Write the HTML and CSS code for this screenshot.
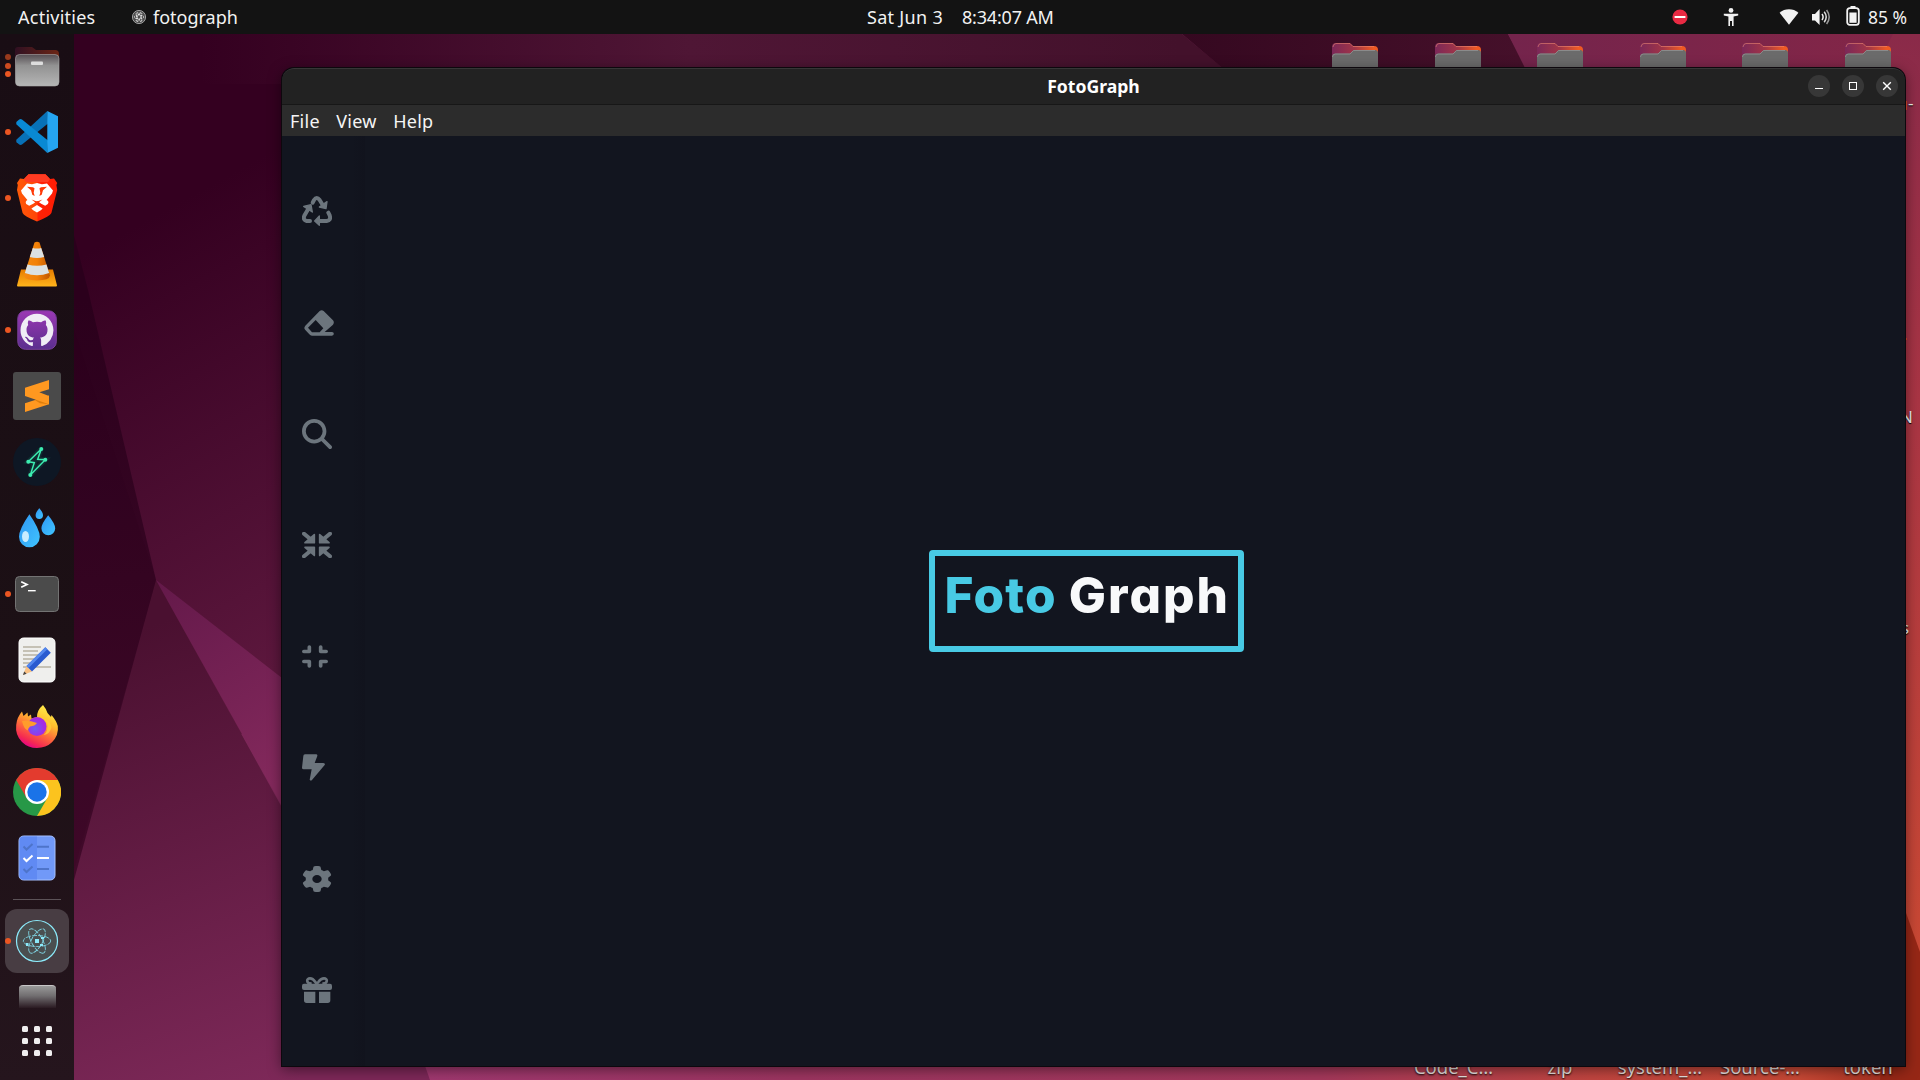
FILE: index.html
```html
<!DOCTYPE html>
<html lang="en">
<head>
<meta charset="utf-8">
<title>FotoGraph</title>
<link rel="stylesheet" href="styles.css">
</head>
<body>
<header class="topbar">
  <div class="topbar-left">
    <span class="activities">Activities</span>
    <span class="app-menu">
      <svg width="14" height="14" viewBox="0 0 14 14"><circle cx="7" cy="7" r="6.6" fill="#4b4b4b" stroke="#bbb" stroke-width=".8"/><g fill="none" stroke="#eee" stroke-width=".9" stroke-dasharray="1.4 .8"><ellipse cx="7" cy="7" rx="4.8" ry="1.9"/><ellipse cx="7" cy="7" rx="4.8" ry="1.9" transform="rotate(60 7 7)"/><ellipse cx="7" cy="7" rx="4.8" ry="1.9" transform="rotate(120 7 7)"/></g></svg>
      <span>fotograph</span>
    </span>
  </div>
  <div class="clock"><span class="date">Sat Jun 3</span><span class="time">8:34:07 AM</span></div>
  <div class="tray">
    <svg class="tray-dnd" width="16" height="16" viewBox="0 0 16 16"><circle cx="8" cy="8" r="7.6" fill="#e92a43"/><rect x="2.6" y="7" width="10.8" height="2" fill="#fff"/></svg>
    <svg class="tray-access" width="16" height="18" viewBox="0 0 16 18" fill="#f2f2f2"><circle cx="8" cy="2.4" r="2.4"/><path d="M.8 5.7h14.4v1.7L10.6 8.6V18H9v-5H7v5H5.4V8.6L.8 7.4z"/></svg>
    <svg class="tray-wifi" width="20" height="16" viewBox="0 0 20 16" fill="#f2f2f2"><path d="M10 15.8.6 3.8C5.8-.8 14.2-.8 19.4 3.8z"/></svg>
    <svg class="tray-volume" width="20" height="18" viewBox="0 0 20 18"><path d="M1 6h3l4.600-5v16L4 12.400H1z" fill="#f2f2f2"/><g fill="none" stroke="#f2f2f2" stroke-width="1.500"><path d="M11 6q2.200 3 0 6"/><path d="M13.200 3.800q4 5.200 0 10.400" opacity=".9"/><path d="M15.600 2q5.200 7 0 14" opacity=".6"/></g></svg>
    <svg class="tray-battery" width="14" height="20" viewBox="0 0 14 20"><rect x="4.500" y="0" width="5" height="3" fill="#f2f2f2"/><rect x="1.200" y="2.200" width="11.600" height="16.600" rx="2.600" fill="none" stroke="#f2f2f2" stroke-width="1.800"/><rect x="3.400" y="6.500" width="7.200" height="10.300" fill="#f2f2f2"/></svg>
    <span class="battery-text">85 %</span>
  </div>
</header>

<div class="screen">
  <nav class="dock">
    <div class="dock-item"><i class="dots three"><b></b><b></b><b></b></i>
      <svg viewBox="0 0 48 48"><defs><linearGradient id="fb"><stop offset="0" stop-color="#301022"/><stop offset="1" stop-color="#6c2515"/></linearGradient><linearGradient id="ff" x2="0" y2="1"><stop offset="0" stop-color="#554e53"/><stop offset=".35" stop-color="#929292"/><stop offset="1" stop-color="#b5b5b5"/></linearGradient></defs><path d="M2 15V7q0-3 3-3h14l4 3h19q4 0 4 4v9H2z" fill="url(#fb)"/><rect x="2.500" y="11.500" width="43.500" height="31.500" rx="4" fill="url(#ff)" stroke="#aaa" stroke-opacity=".6"/><rect x="18" y="18.500" width="12" height="3.500" rx="1" fill="#ddd"/></svg></div>
    <div class="dock-item"><i class="dots"><b></b></i>
      <svg viewBox="0 0 48 48"><path d="M34.300 3 3.600 31.500q-1 1.500 0 2.800l2.600 2.300q1.400.8 2.800 0L35 15.500z" fill="#0871b7"/><path d="M34.300 45 3.600 16.500q-1-1.500 0-2.800l2.600-2.300q1.400-.8 2.800 0L35 32.500z" fill="#0989d3"/><path d="M34.300 3 45 8.300v31.400L34.300 45z" fill="#25a5f1"/></svg></div>
    <div class="dock-item"><i class="dots"><b></b></i>
      <svg viewBox="0 0 48 48"><defs><linearGradient id="br"><stop offset="0" stop-color="#ff5b08"/><stop offset=".5" stop-color="#ff4408"/><stop offset=".52" stop-color="#ff2205"/><stop offset="1" stop-color="#ff1c04"/></linearGradient></defs><path d="M15.500.2h17L37 5l4-.4 3.200 4.400-.8 2 .8 5-5.800 23Q37 42 24 47.600 11 42 9.600 39L4 16l.8-5-.8-2 3-4.400L11 5z" fill="url(#br)"/><path d="M15.500.2h17L37 5l-2 3H13l-2-3z" fill="#ff3b22"/><path d="m14 9.500 5 .8 5-1.200 5 1.200 5-.8 6 7-1 3-5.400 6.500q3 1.500 1.200 4l-2.600 1.800-4-2-4-2.800-4 2.800-4 2-3-1.800q-1.400-2.500 1.200-4L9 19.500l-1-3zM24 31l5.600 3.500q-.8 1.500-5.600 4-4.800-2.500-5.600-4z" fill="#fff"/><path d="m14 12.800 6 .5 1.500 1-.8 4.500 1 3.200-2.400-1.200-1.300-4.600zM34 12.800l-6 .5-1.500 1 .8 4.500-1 3.200 2.400-1.200 1.300-4.600zM18.500 25.500l5.500 2 5.500-2-4.500 3.500h-2z" fill="#ff3907"/></svg></div>
    <div class="dock-item">
      <svg viewBox="0 0 48 48"><defs><linearGradient id="vl"><stop offset="0" stop-color="#f48a13"/><stop offset=".5" stop-color="#f28107"/><stop offset="1" stop-color="#c05600"/></linearGradient><linearGradient id="vb" x2="0" y2="1"><stop offset="0" stop-color="#e67c00"/><stop offset="1" stop-color="#ffb41c"/></linearGradient></defs><path d="M8 29.500h32L44 45.500q0 1-1 1H5q-1 0-1-1z" fill="url(#vb)"/><path d="M21.500 2.500q2.500-1.600 5 0L37 35.500q-.5 4.800-13 5-12.500-.2-13-5z" fill="url(#vl)"/><path d="M19.800 8q4.200 1 8.400 0l3 9q-7.200 2-14.400 0zM14.500 24.500q9.500 2.600 19 0l2.600 8.500q-12.100 4.500-24.200 0z" fill="#dbe1e3"/></svg></div>
    <div class="dock-item"><i class="dots"><b></b></i>
      <svg viewBox="0 0 48 48"><defs><linearGradient id="gh" x2="0" y2="1"><stop offset="0" stop-color="#9b38b4"/><stop offset="1" stop-color="#5b2f8e"/></linearGradient></defs><rect x="4.800" y="4.800" width="38.500" height="38.500" rx="7.500" fill="url(#gh)" stroke="#7b3f9c"/><path transform="translate(7.500 7.800) scale(2.060)" fill="#f0edf5" d="M8 0C3.580 0 0 3.580 0 8c0 3.540 2.290 6.530 5.470 7.590.4.070.55-.17.55-.38 0-.19-.010-.82-.010-1.490-2.010.37-2.530-.49-2.690-.94-.090-.23-.48-.94-.82-1.130-.28-.15-.68-.52-.010-.53.63-.010 1.080.58 1.230.82.72 1.210 1.870.87 2.330.66.070-.52.28-.87.51-1.070-1.780-.2-3.640-.89-3.640-3.950 0-.87.31-1.590.82-2.150-.080-.2-.36-1.020.080-2.120 0 0 .67-.21 2.200.82.64-.18 1.320-.27 2-.27s1.360.090 2 .27c1.530-1.040 2.200-.82 2.200-.82.44 1.100.16 1.920.080 2.120.51.56.82 1.270.82 2.150 0 3.070-1.870 3.750-3.650 3.950.29.25.54.73.54 1.480 0 1.070-.010 1.930-.010 2.200 0 .21.15.46.55.38A8.010 8.010 0 0 0 16 8c0-4.420-3.580-8-8-8z"/></svg></div>
    <div class="dock-item">
      <svg viewBox="0 0 48 48"><rect width="48" height="48" rx="3" fill="#4a4a4a"/><path d="m12 31.300 24-7.700v8.700L12 40z" fill="#ff9820"/><path d="m21.700 28 6-2 8.300 6.300-9-1z" fill="#dd7d0c"/><path d="M12 15.700 36 8v9.300l-9.700 3L36 24v8.300L12 24z" fill="#ff9820"/></svg></div>
    <div class="dock-item">
      <svg viewBox="0 0 48 48"><circle cx="24" cy="24" r="24" fill="#0e1724"/><path d="m28.300 11-3.600 10.300 7.600.4L17.300 37l4-12.300-6-1z" fill="none" stroke="#123a3b" stroke-width="5" opacity=".6"/><path d="m28.300 11-3.600 10.300 7.600.4L17.300 37l4-12.300-6-1z" fill="none" stroke="#3cecb0" stroke-width="1.500"/><g fill="#3cecb0"><circle cx="28.300" cy="11" r="2"/><circle cx="32.300" cy="21.700" r="2"/><circle cx="15.300" cy="23.700" r="2"/><circle cx="17.300" cy="37" r="2"/></g></svg></div>
    <div class="dock-item nudge">
      <svg viewBox="0 0 48 48"><defs><linearGradient id="dr" x2="1" y2="1"><stop offset="0" stop-color="#2f96f3"/><stop offset="1" stop-color="#40c4ff"/></linearGradient></defs><g fill="url(#dr)"><path d="M16.400 10.300q10.400 15 10.400 22.500a10.400 10.400 0 0 1-20.800 0q0-7.500 10.400-22.500z"/><path d="M26.300 4.300q3.700 4.200 3.700 7a3.700 3.700 0 0 1-7.400 0q0-2.800 3.700-7z"/><path d="M35.200 11.300q7 8.600 7 13a6.900 6.900 0 0 1-13.800 0q0-4.400 6.800-13z"/></g><ellipse cx="12.500" cy="32.500" rx="3.500" ry="5.600" fill="#c9edff"/></svg></div>
    <div class="dock-item"><i class="dots"><b></b></i>
      <svg viewBox="0 0 48 48"><rect x="2.500" y="6.500" width="43" height="35" rx="4" fill="#4b4b4b" stroke="#737373"/><path d="m8.200 11.700 5.800 2.800-5.800 2.800" fill="none" stroke="#fff" stroke-width="1.700"/><path d="M15 20.700h7.700" stroke="#fff" stroke-width="1.400"/></svg></div>
    <div class="dock-item">
      <svg viewBox="0 0 48 48"><rect x="6" y="2" width="36" height="44" rx="4.500" fill="#efefed" stroke="#fff"/><path d="M10 11h18M10 15h15M10 19h16M10 23h13M10 27h10M10 31h28" stroke="#c5c1b5" stroke-width="1.800"/><path d="m10 39 3.500-9 5.500 5.500z" fill="#fac183"/><path d="m10 39 1.200-3.400 2.400 2.100z" fill="#444"/><path d="m13.500 30 18.800-18.700 5.500 5.500L19 35.500z" fill="#2a5bd0"/><path d="m13.500 30 18.800-18.700 2 2L15.500 32z" fill="#5488ee"/></svg></div>
    <div class="dock-item nudge">
      <svg viewBox="0 0 48 48"><defs><linearGradient id="fx" x1=".8" y1="0" x2=".3" y2="1"><stop offset="0" stop-color="#fff44f"/><stop offset=".35" stop-color="#ffc02e"/><stop offset=".6" stop-color="#ff7139"/><stop offset=".85" stop-color="#f52a52"/><stop offset="1" stop-color="#e3008b"/></linearGradient><radialGradient id="fp" cx=".4" cy=".6"><stop offset="0" stop-color="#6b5cf6"/><stop offset="1" stop-color="#a52ae2"/></radialGradient></defs><path d="M30 3q3 3.500 4.500 8l3.500 4 .5-2q5 6 6.300 11Q46 33 39 40.300 33 46 24 46q-9 0-15-6-7-7-5.800-17Q4 15 9 9.500l1.500 4.500 4-3.500.5 4 3-2 .5 4L24 15q0-7 6-12z" fill="url(#fx)"/><circle cx="24" cy="24.500" r="9.500" fill="url(#fp)"/><path d="M9 19q7-1 15 2-2 3-7 3.500-2 2-2 4-4-1-6-9.500z" fill="#ff9c2c"/><path d="M28 15.500q9 4 6 13-1 3-3.500 4.500Q37 32 38.500 25.500 38 18 28 15.500z" fill="#ffcb38" opacity=".85"/></svg></div>
    <div class="dock-item">
      <svg viewBox="0 0 48 48"><circle cx="24" cy="24" r="24" fill="#279847"/><path d="M24 24 13.600 30 3.200 12A24 24 0 0 1 44.800 12z" fill="#e33b2e"/><path d="M24 12h20.800A24 24 0 0 1 24 48l10.400-18z" fill="#fcc31e"/><circle cx="24" cy="24" r="12" fill="#fff"/><circle cx="24" cy="24" r="9.700" fill="#1a73e8"/></svg></div>
    <div class="dock-item">
      <svg viewBox="0 0 48 48"><rect x="6" y="2" width="36" height="44" rx="4.500" fill="#7199f8" stroke="#a6c0ff"/><path d="M10.500 2.500H24v43H10.500q-4 0-4-4v-35q0-4 4-4z" fill="#608af3"/><g fill="none" stroke-width="2"><path d="m10.500 12.500 3 3 6-5.500M24 12.700h12M10.500 35l3 3 6-5.500M24 35h12" stroke="#4e74ca"/><path d="m10.500 24 3 3 6-5.500M24 24h12" stroke="#fff"/></g></svg></div>
    <hr class="dock-sep">
    <div class="dock-item active"><i class="dots"><b></b></i>
      <svg viewBox="0 0 48 48"><circle cx="24" cy="24" r="20.500" fill="#4a4f50" stroke="#8ceafa" stroke-width="1.200"/><g fill="none" stroke="#7fd4e2" stroke-width=".9" stroke-dasharray="5 1"><ellipse cx="24" cy="24" rx="13.700" ry="5.500"/><ellipse cx="24" cy="24" rx="13.700" ry="5.500" transform="rotate(60 24 24)"/><ellipse cx="24" cy="24" rx="13.700" ry="5.500" transform="rotate(120 24 24)"/></g><g fill="#8ceafa"><rect x="22" y="22" width="4" height="4"/><rect x="28" y="20" width="3" height="2"/><rect x="13" y="26" width="2.500" height="3"/><rect x="27" y="27" width="3" height="2"/></g></svg></div>
    <div class="trash"></div>
    <div class="apps"><b></b><b></b><b></b><b></b><b></b><b></b><b></b><b></b><b></b></div>
  </nav>

  <main class="desktop">
    <svg class="wallpaper" width="1920" height="1080" viewBox="0 0 1920 1080">
      <defs>
        <linearGradient id="w0" gradientUnits="userSpaceOnUse" x1="110" y1="240" x2="330" y2="640"><stop offset="0" stop-color="#340020"/><stop offset="1" stop-color="#5c173d"/></linearGradient>
        <linearGradient id="w1" gradientUnits="userSpaceOnUse" x1="74" y1="300" x2="120" y2="860"><stop offset="0" stop-color="#2b001c"/><stop offset="1" stop-color="#410a2a"/></linearGradient>
        <linearGradient id="w2" gradientUnits="userSpaceOnUse" x1="110" y1="640" x2="270" y2="1090"><stop offset="0" stop-color="#4a1030"/><stop offset="1" stop-color="#7e2959"/></linearGradient>
        <linearGradient id="w3" gradientUnits="userSpaceOnUse" x1="160" y1="580" x2="282" y2="780"><stop offset="0" stop-color="#64194a"/><stop offset="1" stop-color="#83295c"/></linearGradient>
        <linearGradient id="wt" gradientUnits="userSpaceOnUse" x1="200" y1="0" x2="1180" y2="0"><stop offset="0" stop-color="#340020"/><stop offset=".5" stop-color="#4f1635"/><stop offset="1" stop-color="#43112b"/></linearGradient>
        <linearGradient id="wd" gradientUnits="userSpaceOnUse" x1="1180" y1="0" x2="1520" y2="0"><stop offset="0" stop-color="#350820"/><stop offset="1" stop-color="#45102a"/></linearGradient>
        <linearGradient id="wp" gradientUnits="userSpaceOnUse" x1="1510" y1="0" x2="1900" y2="0"><stop offset="0" stop-color="#74244c"/><stop offset="1" stop-color="#832647"/></linearGradient>
        <linearGradient id="wr" gradientUnits="userSpaceOnUse" x1="0" y1="34" x2="0" y2="950"><stop offset="0" stop-color="#8a2a49"/><stop offset=".4" stop-color="#a93544"/><stop offset="1" stop-color="#c94834"/></linearGradient>
        <linearGradient id="wb" gradientUnits="userSpaceOnUse" x1="420" y1="0" x2="1920" y2="0"><stop offset="0" stop-color="#a03870"/><stop offset=".25" stop-color="#9c3560"/><stop offset=".6" stop-color="#a4385b"/><stop offset=".78" stop-color="#c14540"/><stop offset=".92" stop-color="#c74835"/><stop offset="1" stop-color="#992818"/></linearGradient>
      </defs>
      <rect width="1920" height="1080" fill="#7d2858"/>
      <path d="M74 34h300v700H74z" fill="url(#w0)"/>
      <path d="M200 34h982l60 50H200z" fill="url(#wt)"/>
      <path d="M1182 34h326l30 54h-292z" fill="url(#wd)"/>
      <path d="M1508 34h412v60h-382z" fill="url(#wp)"/>
      <path d="M1893 34h27v1046h-40V60z" fill="url(#wr)"/>
      <path d="M156 580 300 840v240H74V620z" fill="url(#w2)"/>
      <path d="M74 235l14 55 68 290L74 880z" fill="url(#w1)"/>
      <path d="M74 330l82 250-82 290z" fill="#2a001a" opacity=".12"/>
      <path d="m156 580 144 112v146z" fill="url(#w3)"/>
      <path d="M423 1060h1497v20H430z" fill="url(#wb)"/>
      <path d="m1900 896 20 56v128h-40z" fill="#962716"/>
      <path d="M1905 101h2v9h-2zM1905 338h2v2h-2z" fill="#d9482c"/>
    </svg>
    <svg width="0" height="0"><defs><linearGradient id="dg"><stop offset="0" stop-color="#7b2858"/><stop offset=".5" stop-color="#a23547"/><stop offset=".9" stop-color="#ee5a25"/></linearGradient><symbol id="folder" viewBox="0 0 46 40"><path d="M0 20V4q0-4 4-4h14l3 3h21q4 0 4 4v13z" fill="url(#dg)"/><path d="M1 4q.5-3.500 3-3.500h14l3 3h21" fill="none" stroke="#ef8a72" stroke-opacity=".55"/><path d="M0 40V14q0-3.500 3.500-3.500H18L21.500 7H43q3 0 3 3v30z" fill="#6b6b6b"/><path d="M.5 14q0-3 3-3H18L21.500 7.500H43" fill="none" stroke="#999" stroke-opacity=".7"/></symbol></defs></svg>
    <div class="folders">
      <svg><use href="#folder"/></svg><svg><use href="#folder"/></svg><svg><use href="#folder"/></svg><svg><use href="#folder"/></svg><svg><use href="#folder"/></svg><svg><use href="#folder"/></svg>
    </div>
    <div class="labels"><span>Code_C…</span><span>zip</span><span>system_…</span><span>Source-…</span><span>token</span></div>
    <span class="edge-label e1">-</span><span class="edge-label e2">N</span><span class="edge-label e3">s</span>

    <section class="window">
      <div class="titlebar">
        <h1>FotoGraph</h1>
        <div class="controls">
          <button aria-label="Minimize"><svg viewBox="0 0 22 22"><path d="M7 13.500h8" stroke="#fff"/></svg></button>
          <button aria-label="Maximize"><svg viewBox="0 0 22 22"><rect x="7.500" y="7.500" width="7" height="7" fill="none" stroke="#fff"/></svg></button>
          <button aria-label="Close"><svg viewBox="0 0 22 22"><path d="m7.200 7.200 7.600 7.600m0-7.600-7.600 7.600" stroke="#fff" stroke-width="1.400"/></svg></button>
        </div>
      </div>
      <div class="menubar"><span>File</span><span>View</span><span>Help</span></div>
      <div class="content">
        <aside class="tools">
          <div class="tool"><svg width="30" height="30" viewBox="0 0 90 90"><g fill="none" stroke="currentColor" stroke-width="12" stroke-linecap="round"><path d="m32 20 4-8q8-12 17 0l11 18"/><path d="m79 50 4 8q5 15-9 17H50"/><path d="M24 75H14Q2 72 7 59l13-22"/></g><g fill="currentColor" stroke="currentColor" stroke-width="4" stroke-linejoin="round"><path d="m75 17-3 21-20-5zM52 60v28L38 75zM5 31l22-5 4 22z"/></g></svg></div>
          <div class="tool eraser"><svg width="30" height="26" viewBox="0 0 90 78"><path fill="currentColor" fill-rule="evenodd" d="M4 47 47 3q6-5 12 0l28 28q5 6 0 13L62 66h22a5.500 5.500 0 0 1 0 11H24q-5 0-8-4L4 60q-6-6 0-13zm31-17L12 53l12 14h23l11-12z"/></svg></div>
          <div class="tool"><svg width="30" height="30" viewBox="0 0 512 512"><path fill="currentColor" d="M416 208c0 45.900-14.900 88.300-40 122.700L502.600 457.400c12.500 12.500 12.500 32.800 0 45.300s-32.800 12.500-45.300 0L330.700 376c-34.400 25.200-76.800 40-122.700 40C93.100 416 0 322.900 0 208S93.100 0 208 0S416 93.100 416 208zM208 352a144 144 0 1 0 0-288 144 144 0 1 0 0 288z"/></svg></div>
          <div class="tool"><svg width="30" height="26" viewBox="0 0 90 78"><defs><g id="arrow"><path d="m6 5 20 17" stroke="currentColor" stroke-width="12" stroke-linecap="round"/><path d="M37 8v24H9z" fill="currentColor" stroke="currentColor" stroke-width="5" stroke-linejoin="round"/></g></defs><use href="#arrow"/><use href="#arrow" transform="matrix(-1 0 0 1 90 0)"/><use href="#arrow" transform="matrix(1 0 0 -1 0 78)"/><use href="#arrow" transform="matrix(-1 0 0 -1 90 78)"/></svg></div>
          <div class="tool"><svg width="26" height="23" viewBox="0 0 78 69"><path fill="none" stroke="currentColor" stroke-width="11" stroke-linecap="round" stroke-linejoin="round" d="M5.500 19.500H22V6m34 0v13.500h16.500M5.500 49.500H22V63m34 0V49.500h16.500"/></svg></div>
          <div class="tool"><svg width="23" height="27" viewBox="0 0 69 79"><path fill="currentColor" d="M9 0h33q5 0 4 5l-8 21h26q7 1 4 6L30 77q-4 4-7-1l6-31H5q-5 0-5-5L4 5q0-5 5-5z"/></svg></div>
          <div class="tool"><svg width="30" height="26" viewBox="0 0 512 512" preserveAspectRatio="none"><path fill="currentColor" d="M495.900 166.600c3.200 8.700 .5 18.400-6.400 24.600l-43.300 39.400c1.100 8.300 1.700 16.800 1.700 25.400s-.6 17.100-1.700 25.400l43.300 39.400c6.900 6.200 9.600 15.900 6.400 24.600c-4.400 11.900-9.700 23.300-15.800 34.300l-4.700 8.100c-6.600 11-14 21.400-22.100 31.200c-5.900 7.200-15.700 9.600-24.500 6.800l-55.700-17.700c-13.400 10.300-28.200 18.900-44 25.400l-12.500 57.100c-2 9.100-9 16.300-18.200 17.800c-13.800 2.300-28 3.500-42.500 3.500s-28.700-1.200-42.500-3.500c-9.200-1.500-16.200-8.700-18.200-17.800l-12.500-57.100c-15.800-6.500-30.600-15.100-44-25.400L83.100 425.900c-8.800 2.800-18.600 .3-24.500-6.800c-8.100-9.800-15.500-20.200-22.100-31.200l-4.700-8.100c-6.100-11-11.400-22.400-15.800-34.300c-3.200-8.700-.5-18.400 6.400-24.600l43.300-39.400C64.600 273.100 64 264.600 64 256s.6-17.100 1.700-25.400L22.400 191.200c-6.900-6.200-9.600-15.900-6.400-24.600c4.400-11.900 9.700-23.300 15.800-34.300l4.700-8.100c6.600-11 14-21.400 22.100-31.200c5.900-7.200 15.700-9.600 24.500-6.800l55.700 17.700c13.400-10.300 28.200-18.900 44-25.400l12.500-57.100c2-9.100 9-16.300 18.200-17.800C227.300 1.200 241.500 0 256 0s28.700 1.200 42.500 3.500c9.200 1.500 16.200 8.700 18.200 17.800l12.500 57.100c15.800 6.500 30.600 15.100 44 25.400l55.700-17.700c8.800-2.800 18.600-.3 24.500 6.800c8.100 9.800 15.500 20.200 22.100 31.200l4.700 8.100c6.100 11 11.400 22.400 15.800 34.300zM256 336a80 80 0 1 0 0-160 80 80 0 1 0 0 160z"/></svg></div>
          <div class="tool"><svg width="30" height="26" viewBox="0 0 90 78"><path d="M29 20C11 20 13 4 24 4q9 0 16 11l4 6 5-6Q57 4 66 4c11 0 13 16-5 16" fill="none" stroke="currentColor" stroke-width="8"/><g fill="currentColor"><rect y="20" width="90" height="19" rx="6"/><path d="M6 44h34v34H14q-8 0-8-8zM51 44h34v26q0 8-8 8H51z"/></g></svg></div>
        </aside>
        <div class="stage"><div class="logo"><span class="foto">Foto</span> <span class="graph">Graph</span></div></div>
      </div>
    </section>
  </main>
</div>
</body>
</html>
```
FILE: styles.css
```css
* { box-sizing: border-box; }
body { margin: 0; width: 1920px; height: 1080px; overflow: hidden; display: flex; flex-direction: column; background: #330020; color: #f2f2f2; font: 18px/24px "Noto Sans", sans-serif; }
svg { display: block; flex: none; }

.topbar { height: 34px; flex: none; display: grid; grid-template-columns: 867px 1fr 248px; align-items: center; background: #131313; z-index: 3; }
.topbar-left { display: flex; padding-left: 18px; }
.activities { width: 114px; letter-spacing: .25px; }
.app-menu { display: flex; align-items: center; gap: 7px; }
.clock { display: flex; }
.date { width: 95px; letter-spacing: .3px; }
.time { letter-spacing: -.2px; }
.tray { display: flex; align-items: center; }
.tray-access { margin-left: 35px; }
.tray-wifi { margin-left: 40px; }
.tray-volume { margin-left: 12px; }
.tray-battery { margin-left: 15px; margin-top: -2px; }
.battery-text { margin-left: 8px; font-size: 17.5px; white-space: nowrap; }

.screen { flex: 1; display: flex; min-height: 0; }
.dock { width: 74px; flex: none; display: flex; flex-direction: column; align-items: center; background: linear-gradient(#190d14, #1c1015 60%, #25151d); z-index: 2; }
.dock-item { width: 64px; height: 66px; flex: none; display: flex; align-items: center; justify-content: center; position: relative; }
.dock-item:first-child { height: 65px; padding-top: 1px; }
.dock-item svg { width: 48px; height: 48px; }
.nudge svg { margin-top: -1px; }
.dots { position: absolute; left: 0; display: flex; flex-direction: column; gap: 2.7px; }
.dots b { width: 6px; height: 6px; border-radius: 50%; background: #ec5622; }
.three { top: 20px; }
.three b:first-child { opacity: .6; }
.three b:nth-child(2) { opacity: .85; }
.dock-sep { width: 48px; height: 1px; margin: 8px 0 9px; border: 0; background: #5c5358; flex: none; }
.dock .active { height: 64px; border-radius: 12px; background: #483d43; }
.trash { width: 37px; height: 23px; margin-top: 12px; flex: none; border-radius: 4px 4px 0 0; border-top: 1px solid #c8c6c7; background: linear-gradient(#999, #716e70 45%, #2a1a22); }
.apps { display: grid; grid-template-columns: repeat(3, 6px); gap: 6px; margin-top: 18px; }
.apps b { width: 6px; height: 6px; border-radius: 1.5px; background: #f0eeef; }

.desktop { flex: 1; position: relative; }
.wallpaper { position: absolute; left: -74px; top: -34px; }
.folders { position: absolute; left: 1258px; top: 9px; display: flex; gap: 56.6px; }
.folders svg { width: 46px; height: 40px; }
.labels { position: absolute; left: 1328px; bottom: 1px; display: grid; grid-template-columns: 103px 110px 90px 110px 106px; justify-items: center; height: 24px; line-height: 24px; font-size: 18.5px; color: #e8e2e0; text-shadow: 0 1px 2px #000; }
.edge-label { position: absolute; font-size: 17px; text-shadow: 0 1px 1px #000; }
.e1 { left: 1834px; top: 57px; }
.e2 { left: 1826px; top: 371px; }
.e3 { left: 1827px; top: 582px; }

.window { position: absolute; left: 208px; top: 34px; width: 1623px; height: 998px; display: flex; flex-direction: column; border-radius: 12px 12px 0 0; background: #12151f; box-shadow: 0 0 0 1px #0d080d, 0 3px 14px rgba(0,0,0,.5); overflow: hidden; }
.titlebar { height: 37px; flex: none; display: grid; grid-template-columns: 1fr auto 1fr; align-items: center; padding-bottom: 1px; background: #222; border-top: 1px solid #363636; border-bottom: 1px solid #171717; border-radius: 12px 12px 0 0; }
.titlebar h1 { margin: 0; grid-column: 2; font-size: 17.6px; line-height: 24px; color: #fff; }
.controls { display: flex; justify-content: flex-end; gap: 12px; padding-right: 7px; }
.controls button { width: 22px; height: 22px; padding: 0; border: 0; border-radius: 50%; background: #373737; }
.menubar { height: 31px; flex: none; display: flex; align-items: center; padding-left: 8px; gap: 16.5px; background: #2c2c2c; color: #f5f5f5; letter-spacing: .25px; }
.content { flex: 1; display: flex; min-height: 0; }
.tools { width: 83px; flex: none; padding: 19.5px 0 0 20px; color: #6c757d; background: linear-gradient(90deg, #12151f 85%, #11131d); }
.tool { height: 111.3px; display: flex; align-items: center; }
.eraser { padding: 1px 0 0 2px; }
.stage { flex: 1; display: flex; align-items: center; justify-content: center; }
.logo { width: 315px; height: 102px; margin: 0 98px 0 0; border: 6px solid #48cae4; border-radius: 4px; padding: 9px 0 0 10px; font: 800 49.5px/60px Inter, sans-serif; letter-spacing: 1.2px; font-feature-settings: "cv11"; white-space: nowrap; }
.foto { color: #48cae4; }
.graph { color: #f8f9fa; letter-spacing: 2px; }
```
